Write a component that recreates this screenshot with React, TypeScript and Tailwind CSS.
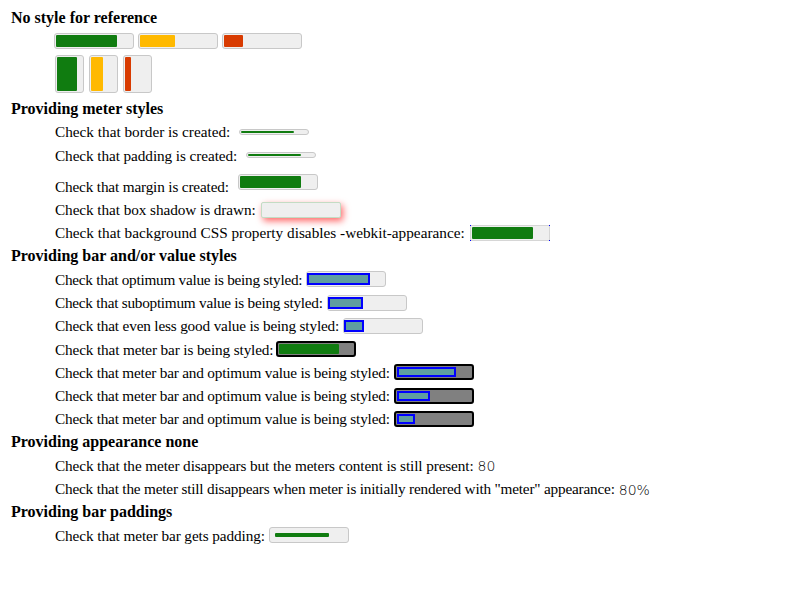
import type { ReactNode } from 'react'

const rowFills = [
  { value: 80, fill: 'bg-[#107c10]' },
  { value: 46, fill: 'bg-[#ffb900]' },
  { value: 25, fill: 'bg-[#d83b01]' },
]

const optimumRows = [
  { label: 'Check that optimum value is being styled:', value: 80, tracking: 'tracking-[-0.25px]' },
  { label: 'Check that suboptimum value is being styled:', value: 45, tracking: 'tracking-[-0.25px]' },
  { label: 'Check that even less good value is being styled:', value: 25, tracking: 'tracking-[-0.17px]' },
]

const barValueRows = [80, 45, 25]

function Heading({ children }: { children: ReactNode }) {
  return (
    <h3 className="flex h-[23.25px] items-center text-[16px] font-bold whitespace-nowrap">
      {children}
    </h3>
  )
}

function Row({
  label,
  children,
  tracking = '',
  className = 'h-[23.25px] items-center',
}: {
  label: string
  children?: ReactNode
  tracking?: string
  className?: string
}) {
  return (
    <div className={`flex pl-[44px] whitespace-nowrap ${className}`}>
      <span className={`text-[15.25px] leading-[23.25px] ${tracking}`}>{label}</span>
      {children}
    </div>
  )
}

function Fill({ value, fill }: { value: number; fill: string }) {
  return <div className={`h-full rounded-[1px] ${fill}`} style={{ width: `${value}%` }} />
}

export default function App() {
  return (
    <div className="min-h-[600px] w-[800px] bg-white pt-[6px] pl-[11px] font-['Liberation_Serif',serif] text-black">
      <Heading>No style for reference</Heading>

      <div className="flex h-[23.25px] items-center gap-[4px] pl-[43px]">
        {rowFills.map((m) => (
          <div key={m.fill} className="flex h-[16px] w-[80px] rounded-[3px] border border-[#c8c8c8] bg-[#efefef] p-[1px]">
            <Fill value={m.value} fill={m.fill} />
          </div>
        ))}
      </div>

      <div className="flex h-[44.5px] items-start gap-[5px] pt-[2px] pl-[44px]">
        {rowFills.map((m) => (
          <div key={m.fill} className="flex h-[38px] w-[29px] rounded-[3px] border border-[#c8c8c8] bg-[#efefef] p-[1px]">
            <Fill value={m.value} fill={m.fill} />
          </div>
        ))}
      </div>

      <Heading>Providing meter styles</Heading>
      <Row label="Check that border is created:">
        <div className="ml-[9px] flex h-[6px] w-[70px] rounded-[3px] border border-[#c8c8c8] bg-[#efefef] p-[1px]">
          <Fill value={80} fill="bg-[#107c10]" />
        </div>
      </Row>
      <Row label="Check that padding is created:" tracking="tracking-[-0.08px]">
        <div className="ml-[9px] flex h-[6px] w-[70px] rounded-[3px] border border-[#c8c8c8] bg-[#efefef] p-[1px]">
          <Fill value={80} fill="bg-[#107c10]" />
        </div>
      </Row>
      <Row label="Check that margin is created:" tracking="tracking-[-0.16px]" className="h-[31.3px] items-end">
        <div className="mb-[8px] ml-[9px] flex h-[16px] w-[80px] rounded-[3px] border border-[#c8c8c8] bg-[#efefef] p-[1px]">
          <Fill value={80} fill="bg-[#107c10]" />
        </div>
      </Row>
      <Row label="Check that box shadow is drawn:" tracking="tracking-[-0.07px]">
        <div className="ml-[5px] h-[16px] w-[80px] rounded-[2px] border border-[#c4dcc4] bg-[#efefef] shadow-[2px_3px_7px_rgba(255,0,0,0.6)]" />
      </Row>
      <Row label="Check that background CSS property disables -webkit-appearance:" tracking="tracking-[0.01px]">
        <div className="relative ml-[5px] flex h-[16px] w-[80px] border border-[#d6d6d6] bg-[#efefef] p-[1px]">
          <Fill value={80} fill="bg-[#107c10]" />
          <span className="absolute -top-px -left-px h-px w-px bg-[#0000ff]" />
          <span className="absolute -top-px -right-px h-px w-px bg-[#0000ff]" />
          <span className="absolute -bottom-px -left-px h-px w-px bg-[#0000ff]" />
          <span className="absolute -right-px -bottom-px h-px w-px bg-[#0000ff]" />
        </div>
      </Row>

      <Heading>Providing bar and/or value styles</Heading>
      {optimumRows.map((r) => (
        <Row key={r.label} label={r.label} tracking={r.tracking}>
          <div className="ml-[4px] flex h-[16px] w-[80px] rounded-[3px] border border-[#c8c8c8] bg-[#efefef] py-[1px]">
            <div className="h-full border-2 border-[#0000ff] bg-[#5f9ea0]" style={{ width: `${r.value}%` }} />
          </div>
        </Row>
      ))}
      <Row label="Check that meter bar is being styled:" tracking="tracking-[-0.14px]">
        <div className="ml-[3px] flex h-[16px] w-[80px] rounded-[3px] border-2 border-black bg-[#808080] p-[1px]">
          <Fill value={81} fill="bg-[#107c10]" />
        </div>
      </Row>
      {barValueRows.map((v) => (
        <Row key={v} label="Check that meter bar and optimum value is being styled:" tracking="tracking-[-0.19px]">
          <div className="ml-[4px] flex h-[16px] w-[80px] rounded-[3px] border-2 border-black bg-[#808080] p-[1px]">
            <div className="h-full border-2 border-[#0000ff] bg-[#5f9ea0]" style={{ width: `${v}%` }} />
          </div>
        </Row>
      ))}

      <Heading>Providing appearance none</Heading>
      <Row label="Check that the meter disappears but the meters content is still present:" tracking="tracking-[-0.11px]">
        <span className="ml-[4px] pt-[3px] font-['DejaVu_Sans',sans-serif] text-[14px] font-light">80</span>
      </Row>
      <Row
        label={'Check that the meter still disappears when meter is initially rendered with "meter" appearance:'}
        tracking="tracking-[-0.19px]"
      >
        <span className="ml-[4px] pt-[3px] font-['DejaVu_Sans',sans-serif] text-[14px] font-light">80%</span>
      </Row>

      <Heading>Providing bar paddings</Heading>
      <Row label="Check that meter bar gets padding:" tracking="tracking-[-0.09px]">
        <div className="ml-[4px] flex h-[16px] w-[80px] rounded-[3px] border border-[#c8c8c8] bg-[#efefef] p-[5px]">
          <Fill value={80} fill="bg-[#107c10]" />
        </div>
      </Row>
    </div>
  )
}
